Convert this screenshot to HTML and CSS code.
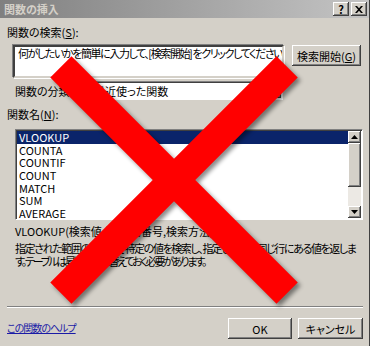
FILE: index.html
```html
<!DOCTYPE html>
<html>
<head>
    <title>関数の挿入</title>
    <link rel="stylesheet" href="styles.css">
</head>
<body>
    <div id="dialog">
        <div class="titlebar">
            <span class="title">関数の挿入</span>
            <div class="caption-buttons">
                <span class="cap-btn help">?</span>
                <span class="cap-btn">
                    <svg width="8" height="7" viewBox="0 0 8 7"><path d="M0 0h2l2 2.2L6 0h2L5 3.5 8 7H6L4 4.8 2 7H0l3-3.5z" fill="#000"/></svg>
                </span>
            </div>
        </div>

        <div class="content">
            <div class="label">関数の検索(<u>S</u>):</div>
            <div class="search-row">
                <div class="search-box">何がしたいかを簡単に入力して、[検索開始] をクリックしてください。</div>
                <button class="btn search-btn">検索開始(<u>G</u>)</button>
            </div>

            <div class="category-row">
                <span>関数の分類(<u>C</u>):</span>
                <div class="combo">
                    <span class="combo-text">最近使った関数</span>
                    <span class="arrow-btn">
                        <svg width="7" height="4" viewBox="0 0 7 4"><path d="M0 0h7L3.5 4z" fill="#000"/></svg>
                    </span>
                </div>
            </div>

            <div class="label names-label">関数名(<u>N</u>):</div>
            <div class="listbox">
                <ul class="items">
                    <li class="selected">VLOOKUP</li>
                    <li>COUNTA</li>
                    <li>COUNTIF</li>
                    <li>COUNT</li>
                    <li>MATCH</li>
                    <li>SUM</li>
                    <li>AVERAGE</li>
                </ul>
                <div class="scrollbar">
                    <span class="arrow-btn">
                        <svg width="7" height="4" viewBox="0 0 7 4"><path d="M0 4h7L3.5 0z" fill="#000"/></svg>
                    </span>
                    <span class="thumb"></span>
                    <span class="track"></span>
                    <span class="arrow-btn">
                        <svg width="7" height="4" viewBox="0 0 7 4"><path d="M0 0h7L3.5 4z" fill="#000"/></svg>
                    </span>
                </div>
            </div>

            <div class="syntax">VLOOKUP(検索値,範囲,列番号,検索方法)</div>
            <p class="desc">指定された範囲の 1 列目で特定の値を検索し、指定した列と同じ行にある値を返しま<br><span class="tight">す。テーブルは昇順で並べ替えておく必要があります。</span></p>

            <div class="separator"></div>

            <div class="footer">
                <a href="#" class="help-link">この関数のヘルプ</a>
                <div class="buttons">
                    <button class="btn ok-btn">OK</button>
                    <button class="btn cancel-btn">キャンセル</button>
                </div>
            </div>
        </div>

        <svg class="cross" width="372" height="346" viewBox="0 0 372 346">
            <g transform="translate(174 180)">
                <rect x="-160" y="-15" width="320" height="30" transform="rotate(45)" fill="#ff0000"/>
                <rect x="-160" y="-15" width="320" height="30" transform="rotate(-45)" fill="#ff0000"/>
            </g>
        </svg>
    </div>
</body>
</html>
```

FILE: styles.css
```css
body {
    margin: 0;
    background: #fff;
    font-family: "Noto Sans CJK JP", sans-serif;
    font-size: 11px;
    font-feature-settings: "palt";
    color: #000;
}
#dialog {
    position: relative;
    width: 369px;
    height: 346px;
    background: #d4d0c8;
    border-right: 1px solid #404040;
    overflow: hidden;
}
.titlebar {
    height: 18px;
    display: flex;
    align-items: center;
    justify-content: space-between;
    padding: 0 2px 0 4px;
    background: linear-gradient(to right, #808080, #c4c4c4);
}
.title {
    color: #d4d0c8;
    font-weight: bold;
}
.caption-buttons {
    display: flex;
    gap: 2px;
}
.cap-btn {
    width: 16px;
    height: 14px;
    box-sizing: border-box;
    display: flex;
    align-items: center;
    justify-content: center;
    background: #d4d0c8;
    box-shadow: inset -1px -1px #404040, inset 1px 1px #fff, inset -2px -2px #808080;
    font-weight: bold;
    font-size: 11px;
    line-height: 1;
}
.content {
    padding: 0 6px 0 7px;
}
.label {
    margin-top: 7px;
    line-height: 14px;
}
.search-row {
    display: flex;
    align-items: flex-start;
    justify-content: space-between;
    margin: 6px 0 0 6px;
}
.search-box {
    width: 263px;
    height: 28px;
    padding: 1px 1px 0 3px;
    background: #fff;
    border: 2px solid;
    border-color: #404040 #d4d0c8 #d4d0c8 #404040;
    box-shadow: 1px 1px #fff, -1px -1px #808080;
    line-height: 10px;
    letter-spacing: -1.4px;
    white-space: nowrap;
    overflow: hidden;
}
.btn {
    font: inherit;
    color: #000;
    padding: 0;
    white-space: nowrap;
    background: #d4d0c8;
    border: none;
    box-shadow: inset -1px -1px #404040, inset 1px 1px #fff, inset -2px -2px #808080;
}
.search-btn {
    width: 69px;
    height: 21px;
    margin-right: 2px;
}
.category-row {
    display: flex;
    align-items: center;
    margin: 3px 0 0 8px;
    height: 19px;
}
.combo {
    flex: 0 0 193px;
    height: 19px;
    box-sizing: border-box;
    display: flex;
    align-items: center;
    justify-content: space-between;
    background: #fff;
    border: 1px solid;
    border-color: #808080 #fff #fff #808080;
    box-shadow: inset 1px 1px #404040;
    padding: 1px 1px 1px 3px;
    margin-left: auto;
    margin-right: 80px;
}
.arrow-btn {
    width: 13px;
    height: 12px;
    display: flex;
    align-items: center;
    justify-content: center;
    background: #d4d0c8;
    box-shadow: inset -1px -1px #404040, inset 1px 1px #fff, inset -2px -2px #808080;
}
.combo .arrow-btn {
    width: 16px;
    height: 15px;
}
.listbox {
    display: flex;
    margin: 8px 0 0 8px;
    height: 91px;
    box-sizing: border-box;
    border: 1px solid;
    border-color: #808080 #fff #fff #808080;
    box-shadow: inset 1px 1px #404040;
    background: #fff;
    padding: 1px;
}
.items {
    flex: 1;
    list-style: none;
    margin: 0;
    padding: 0;
}
.items li {
    height: 12.7px;
    line-height: 12.7px;
    padding-left: 2px;
}
.items .selected {
    background: #0a246a;
    color: #fff;
}
.scrollbar {
    width: 13px;
    display: flex;
    flex-direction: column;
}
.thumb {
    height: 44px;
    background: #d4d0c8;
    box-shadow: inset -1px -1px #404040, inset 1px 1px #fff, inset -2px -2px #808080;
}
.track {
    flex: 1;
    background: #ece9e4;
}
.syntax {
    margin: 4px 0 0 8px;
    line-height: 14px;
    white-space: nowrap;
}
.desc {
    margin: 4px 0 0 8px;
    line-height: 13px;
    letter-spacing: -1.4px;
    white-space: nowrap;
}
.desc .tight {
    letter-spacing: -2.2px;
}
.separator {
    margin-top: 38px;
    border-top: 1px solid #808080;
    border-bottom: 1px solid #fff;
}
.footer {
    display: flex;
    justify-content: space-between;
    align-items: flex-start;
    margin-top: 10px;
}
.help-link {
    color: #1a1aa6;
    margin-top: 3px;
    font-size: 10px;
    line-height: 14px;
    letter-spacing: -1px;
}
.buttons {
    display: flex;
    gap: 6px;
}
.ok-btn {
    width: 64px;
    height: 21px;
}
.cancel-btn {
    width: 65px;
    height: 21px;
}
.cross {
    position: absolute;
    left: 0;
    top: 0;
    pointer-events: none;
    filter: drop-shadow(3px 3px 2px rgba(0, 0, 0, 0.45));
}
```
